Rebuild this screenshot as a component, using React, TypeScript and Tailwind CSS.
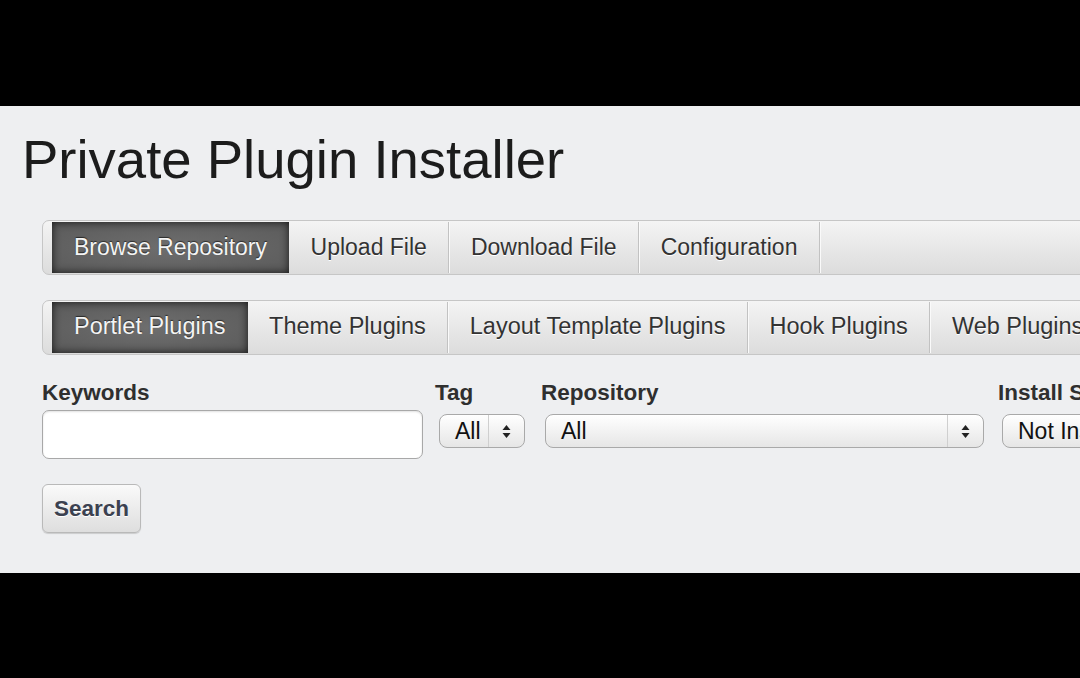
const font = { fontFamily: '"Liberation Sans", Arial, sans-serif' };

type Tab = { label: string; active?: boolean };

const mainTabs: Tab[] = [
  { label: "Browse Repository", active: true },
  { label: "Upload File" },
  { label: "Download File" },
  { label: "Configuration" },
];

const pluginTabs: Tab[] = [
  { label: "Portlet Plugins", active: true },
  { label: "Theme Plugins" },
  { label: "Layout Template Plugins" },
  { label: "Hook Plugins" },
  { label: "Web Plugins" },
];

function TabBar({ tabs, size }: { tabs: Tab[]; size: string }) {
  return (
    <div className="flex h-[55px] w-[1200px] shrink-0 items-stretch rounded-l-[7px] border border-[#c6c6c6] bg-gradient-to-b from-[#f4f4f4] to-[#dcdcdc] py-px pl-[9px]">
      {tabs.map((t) =>
        t.active ? (
          <div
            key={t.label}
            className={`${size} flex shrink-0 items-center whitespace-nowrap bg-[radial-gradient(ellipse_at_center,#6e6e6e,#5a5a5a)] px-[22px] text-[#f4f4f4] shadow-[inset_0_0_9px_rgba(0,0,0,0.75)] [text-shadow:0_-1px_1px_rgba(0,0,0,0.6)]`}
          >
            {t.label}
          </div>
        ) : (
          <div
            key={t.label}
            className={`${size} flex shrink-0 items-center whitespace-nowrap border-r border-r-[#c2c2c2] px-[21.5px] text-[#333] shadow-[1px_0_0_#fafafa] [text-shadow:0_1px_0_#fff]`}
          >
            {t.label}
          </div>
        )
      )}
    </div>
  );
}

function Arrows() {
  return (
    <svg width="9" height="15" viewBox="0 0 9 15" className="text-[#222]">
      <path d="M4.5 1 L8.5 6 L0.5 6 Z" fill="currentColor" />
      <path d="M4.5 14 L8.5 9 L0.5 9 Z" fill="currentColor" />
    </svg>
  );
}

function Select({ value, width }: { value: string; width: string }) {
  return (
    <div
      className={`${width} mx-1 mt-1 flex h-[34px] shrink-0 items-center overflow-hidden rounded-[8px] border border-[#a9a9a9] bg-gradient-to-b from-[#ffffff] to-[#e6e6e6] shadow-[inset_0_1px_0_#fff]`}
    >
      <div className="flex-1 whitespace-nowrap pl-[15px] text-[23px] leading-[32px] text-[#111]">
        {value}
      </div>
      <div className="flex h-full w-[36px] shrink-0 items-center justify-center border-l border-l-[#cfcfcf]">
        <Arrows />
      </div>
    </div>
  );
}

export default function App() {
  return (
    <div className="h-[678px] w-[1080px] overflow-hidden bg-black" style={font}>
      <div className="mt-[106px] h-[467px] overflow-hidden bg-[#eeeff1] pt-[27px]">
        <h1 className="whitespace-nowrap pl-[22px] text-[54.5px] leading-none text-[#1c1c1c]">
          Private Plugin Installer
        </h1>

        <div className="ml-[42px] mt-[32px]">
          <TabBar tabs={mainTabs} size="text-[23px]" />
        </div>
        <div className="ml-[42px] mt-[25px]">
          <TabBar tabs={pluginTabs} size="text-[23.5px]" />
        </div>

        <div className="ml-[42px] mt-[27px] flex w-[1200px] flex-nowrap items-start gap-[12px]">
          <div className="flex w-[381px] shrink-0 flex-col gap-[6px]">
            <label className="text-[22.5px] font-bold leading-none text-[#2f2f2f]">Keywords</label>
            <div className="h-[49px] rounded-[7px] border border-[#a8a8a8] bg-white shadow-[inset_0_1px_2px_rgba(0,0,0,0.12)]" />
          </div>
          <div className="flex shrink-0 flex-col gap-[6px]">
            <label className="text-[22.5px] font-bold leading-none text-[#2f2f2f]">Tag</label>
            <Select value="All" width="w-[86px]" />
          </div>
          <div className="flex shrink-0 flex-col gap-[6px]">
            <label className="text-[22.5px] font-bold leading-none text-[#2f2f2f]">Repository</label>
            <Select value="All" width="w-[439px]" />
          </div>
          <div className="-ml-[2px] flex shrink-0 flex-col gap-[6px]">
            <label className="whitespace-nowrap text-[22.5px] font-bold leading-none text-[#2f2f2f]">Install Status</label>
            <Select value="Not Installed" width="w-[200px]" />
          </div>
        </div>

        <div className="ml-[42px] mt-[25px]">
          <button className="h-[49px] w-[99px] rounded-[6px] border border-[#b9b9b9] bg-gradient-to-b from-[#fafafa] to-[#dedede] text-[22.5px] font-bold text-[#3b4150] shadow-[0_1px_1px_rgba(0,0,0,0.15)] [text-shadow:0_1px_0_#fff]">
            Search
          </button>
        </div>
      </div>
    </div>
  );
}
